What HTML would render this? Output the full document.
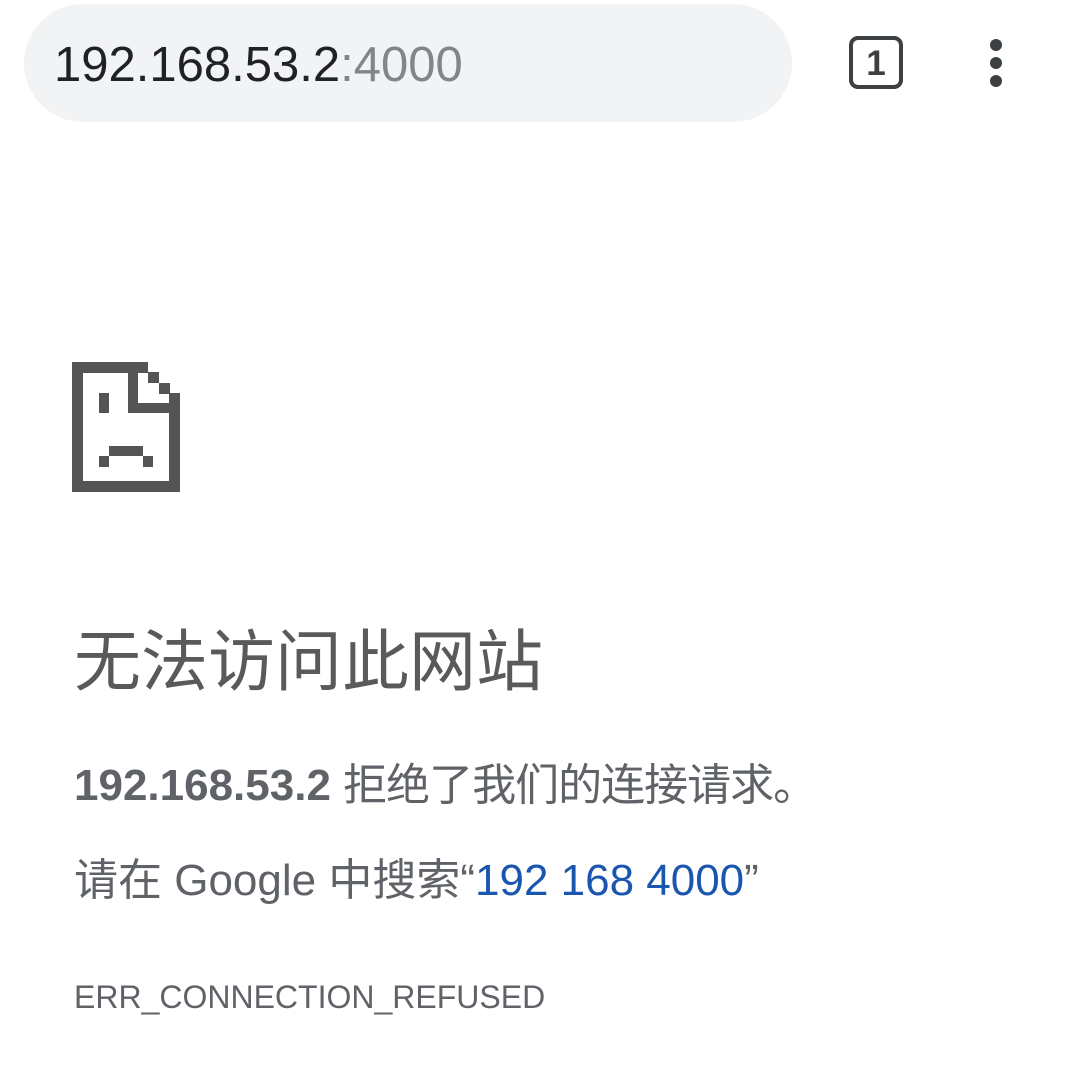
<!DOCTYPE html>
<html><head><meta charset="utf-8"><style>
html,body{margin:0;padding:0;background:#fff;width:1080px;height:1090px;overflow:hidden;position:relative;font-family:"Liberation Sans","Noto Sans CJK SC",sans-serif;}
.a{position:absolute;white-space:nowrap;}
.pill{position:absolute;left:24px;top:4px;width:768px;height:118px;border-radius:59px;background:#f1f3f4;}
.cj{font-family:"Noto Sans CJK SC",sans-serif;}
</style></head><body>
<div class="pill"></div>
<div class="a" style="left:54px;top:41px;font-size:49px;line-height:49px;color:#202124;">192.168.53.2<span style="color:#80868b">:4000</span></div>
<div class="a" style="left:849px;top:36px;width:46px;height:45px;border:4px solid #3c4043;border-radius:9px;"></div>
<div class="a" style="left:849px;top:41px;width:54px;text-align:center;font-size:35px;font-weight:bold;line-height:45px;color:#3c4043;">1</div>
<div class="a" style="left:990px;top:39px;width:12px;height:12px;border-radius:6px;background:#3c4043;"></div>
<div class="a" style="left:990px;top:57px;width:12px;height:12px;border-radius:6px;background:#3c4043;"></div>
<div class="a" style="left:990px;top:75px;width:12px;height:12px;border-radius:6px;background:#3c4043;"></div>
<svg class="a" style="left:0;top:0" width="300" height="520" fill="#555">
<rect x="72" y="362" width="76" height="11"/>
<rect x="72" y="362" width="11" height="130"/>
<rect x="72" y="481" width="108" height="11"/>
<rect x="169" y="393" width="11" height="99"/>
<rect x="148" y="372" width="11" height="11"/>
<rect x="159" y="383" width="11" height="11"/>
<rect x="128" y="372" width="10" height="41"/>
<rect x="128" y="403" width="52" height="10"/>
<rect x="99" y="393" width="10" height="20"/>
<rect x="109" y="446" width="34" height="10"/>
<rect x="99" y="456" width="10" height="11"/>
<rect x="143" y="456" width="10" height="11"/>
</svg>
<div class="a" style="left:74px;top:629px;font-size:67px;line-height:67px;color:#5a5a5a;">无法访问此网站</div>
<div class="a" style="left:74px;top:759px;font-size:44px;line-height:44px;color:#5f6368;"><b>192.168.53.2</b> <span class="cj" style="letter-spacing:-1px">拒绝了我们的连接请求。</span></div>
<div class="a" style="left:74px;top:854px;font-size:44px;line-height:44px;color:#5f6368;"><span class="cj">请在</span> Google <span class="cj">中搜索</span>“<span style="color:#1a56b0">192 168 4000</span>”</div>
<div class="a" style="left:74px;top:981px;font-size:32px;line-height:32px;color:#5f6368;">ERR_CONNECTION_REFUSED</div>
</body></html>
